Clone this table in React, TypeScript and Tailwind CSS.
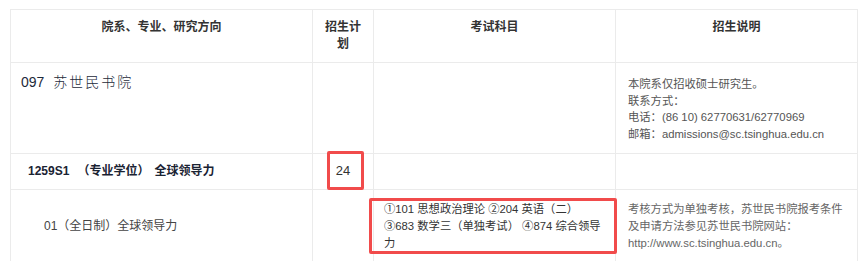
const cell = "border border-[#ebebeb] px-[10px]";

export default function App() {
  return (
    <div className="min-h-[261px] bg-white pt-[9px] pl-[10px] font-['Liberation_Sans','Noto_Sans_CJK_SC',sans-serif] text-[11.3px] leading-[16.5px] text-[#333]">
      <table className="w-[847px] table-fixed border-collapse">
        <colgroup>
          <col className="w-[302px]" />
          <col className="w-[61px]" />
          <col className="w-[242px]" />
          <col className="w-[242px]" />
        </colgroup>
        <thead>
          <tr className="h-[53px] align-top text-[12px] font-bold text-[#333]">
            <th className={`${cell} pt-[9px] leading-[17px]`}>院系、专业、研究方向</th>
            <th className={`${cell} pt-[9px] leading-[17px]`}>
              招生计
              <br />
              划
            </th>
            <th className={`${cell} pt-[9px] leading-[17px]`}>考试科目</th>
            <th className={`${cell} pt-[9px] leading-[17px]`}>招生说明</th>
          </tr>
        </thead>
        <tbody>
          {/* school row */}
          <tr className="h-[90px] align-top">
            <td className={`${cell} pt-[9px]`}>
              <span className="text-[14px] leading-[20px] text-[#1d2a3a]">
                097
                <span className="ml-[9px] font-light tracking-[2px]">苏世民书院</span>
              </span>
            </td>
            <td className={cell} />
            <td className={cell} />
            <td className={`${cell} whitespace-nowrap pl-[12px] pt-[13px] pb-[11px] text-[#555]`}>
              本院系仅招收硕士研究生。
              <br />
              联系方式：
              <br />
              电话：(86 10) 62770631/62770969
              <br />
              邮箱：admissions@sc.tsinghua.edu.cn
            </td>
          </tr>
          {/* major row */}
          <tr className="h-[36px] align-middle">
            <td className={`${cell} whitespace-nowrap pl-[17px] text-[12px] font-bold text-[#1a2333]`}>
              1259S1
              <span className="ml-[8px]">（专业学位）</span>
              <span className="ml-[5px]">全球领导力</span>
            </td>
            <td className={`${cell} relative text-center text-[13px] text-[#333]`}>
              24
              <span className="absolute top-[-3px] left-[14px] h-[39px] w-[37px] rounded-[2px] border-[3px] border-[#f14b4b]" />
            </td>
            <td className={cell} />
            <td className={cell} />
          </tr>
          {/* direction row */}
          <tr className="h-[74px] align-middle leading-[17px]">
            <td className={`${cell} pl-[33px] text-[12px] text-[#444]`}>01（全日制）全球领导力</td>
            <td className={cell} />
            <td className={`${cell} relative whitespace-nowrap text-[#333]`}>
              ①101 思想政治理论 ②204 英语（二）
              <br />
              ③683 数学三（单独考试） ④874 综合领导
              <br />
              力
              <span className="absolute top-[8px] left-[-5px] h-[56px] w-[248px] rounded-[2px] border-[3px] border-[#f14b4b]" />
            </td>
            <td className={`${cell} whitespace-nowrap pl-[12px] text-[#666]`}>
              考核方式为单独考核，苏世民书院报考条件
              <br />
              及申请方法参见苏世民书院网站：
              <br />
              http://www.sc.tsinghua.edu.cn。
            </td>
          </tr>
        </tbody>
      </table>
    </div>
  );
}
